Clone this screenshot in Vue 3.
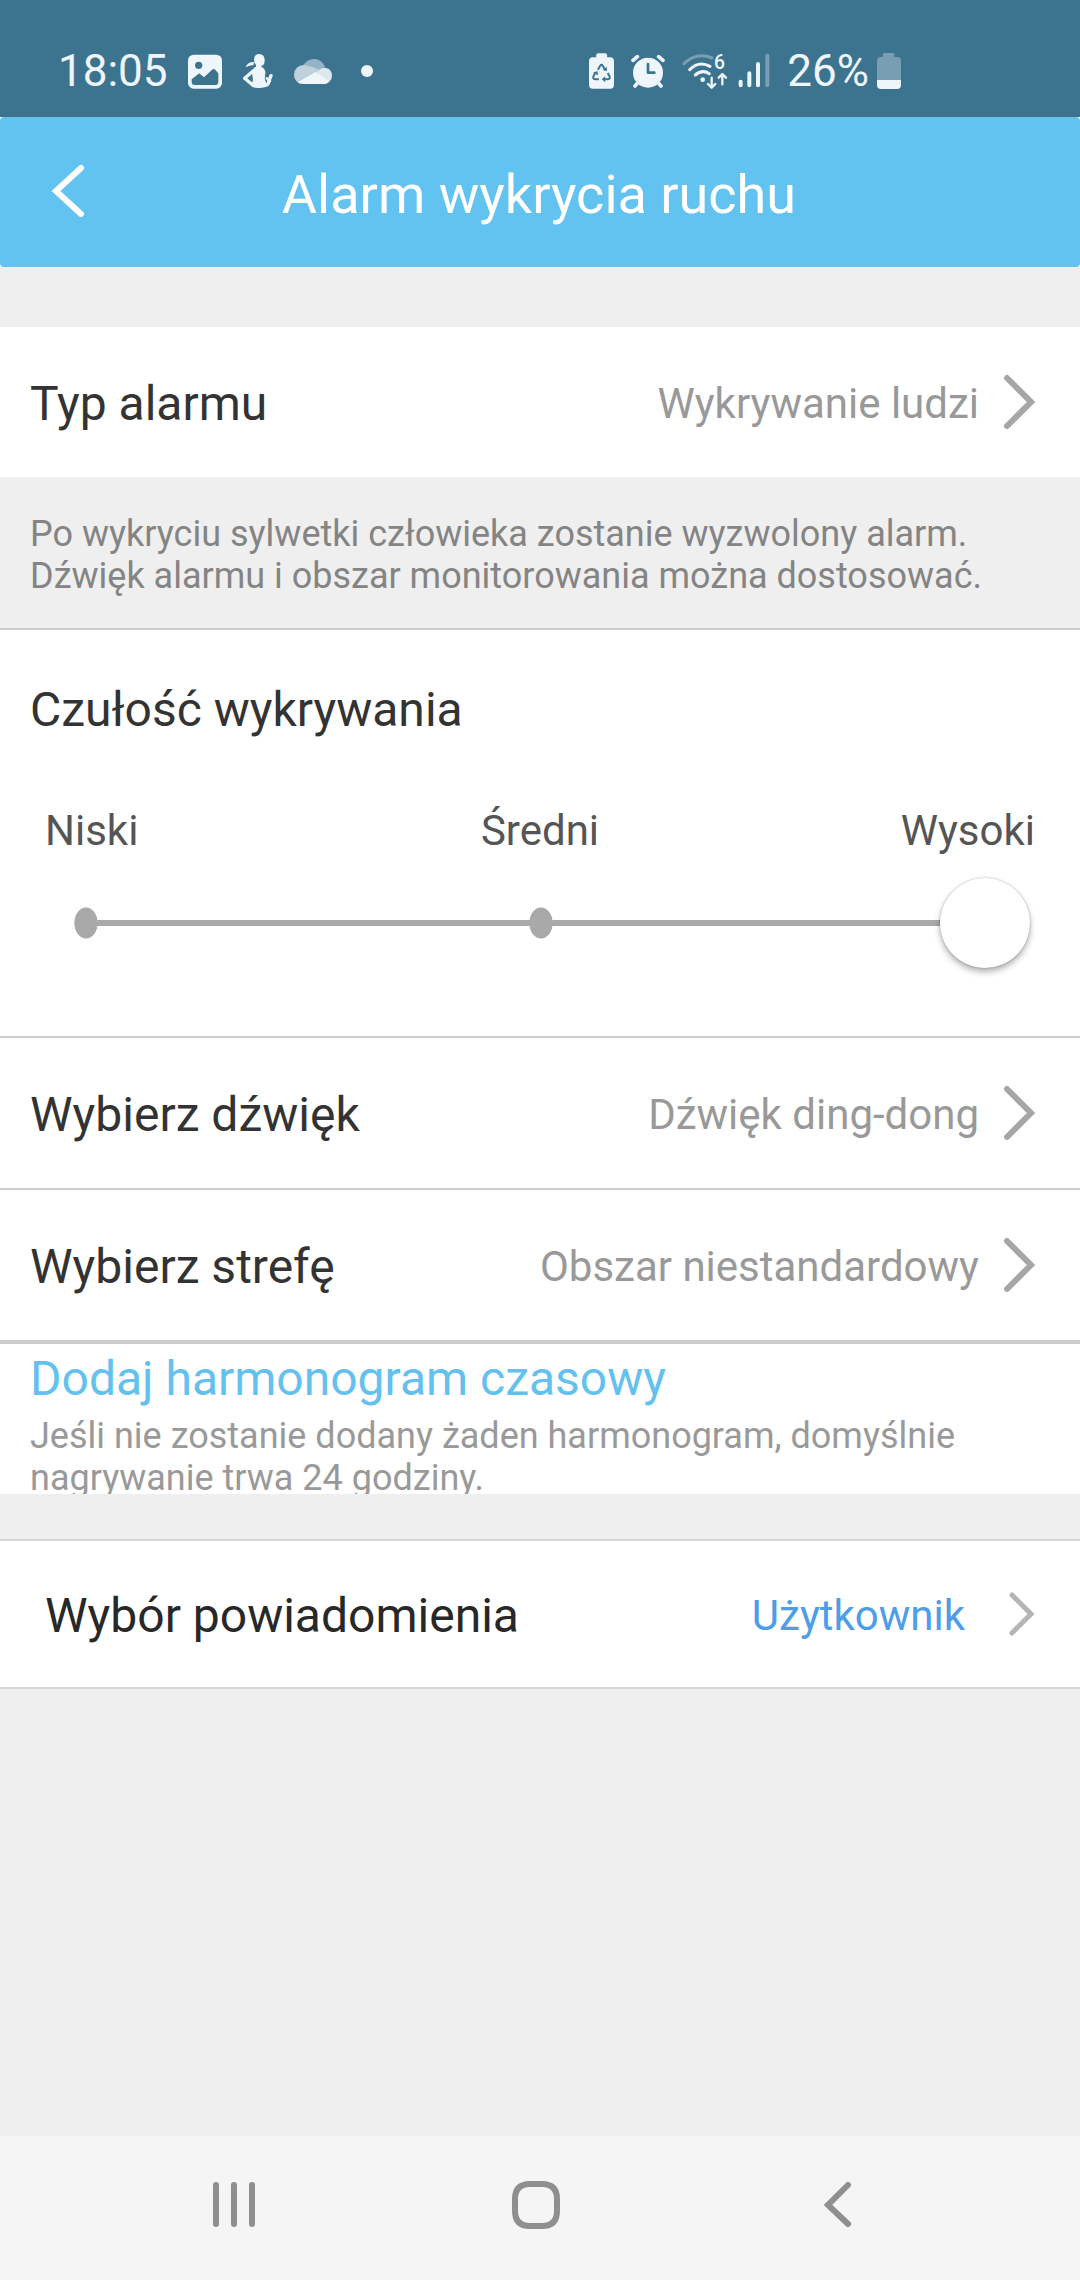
<template>
  <div class="screen">
    <div class="status-bar">
      <div class="status-left">
        <span class="status-text">18:05</span>
        <svg width="34" height="36" viewBox="0 0 102 108">
          <rect x="0" y="5" width="102" height="102" rx="17" fill="#eef6fc" />
          <circle cx="32" cy="37" r="11" fill="#3c7490" />
          <path d="M11 79 L32 62 Q34 61 36 63 L48 73 L74 49 Q77 47 80 49 L91 61 V86 Q91 96 81 96 H20 Q11 96 11 87 Z" fill="#3c7490" />
        </svg>
        <svg width="32" height="36" viewBox="0 0 96 108" fill="#eef6fc">
          <path d="M36 20 Q36 3 52 3 Q67 4 68 20 Q69 36 58 39 V46 H42 V36 Q36 30 36 20 Z" />
          <path d="M11 43 Q16 27 36 27 L34 37 Q24 36 11 43 Z" />
          <path d="M38 42 H58 Q70 46 70 60 L68 78 L74 92 Q72 105 52 105 Q34 106 28 99 L33 80 L30 60 Z" />
          <path d="M36 52 L8 76 L32 96 M66 98 Q80 96 80 86 L87 68" fill="none" stroke="#eef6fc" stroke-width="10" stroke-linecap="round" stroke-linejoin="round" />
          <path d="M74 76 L84 84" stroke="#eef6fc" stroke-width="8" stroke-linecap="round" />
        </svg>
        <svg width="38" height="36" viewBox="0 0 114 108">
          <path d="M28 36 Q40 18 60 18 Q84 19 93 42 L76 52 Z" fill="#94b3c4" />
          <path d="M28 93 Q0 90 0 65 Q2 38 30 36 Q40 36 76 50 L10 87 Z" fill="#bfd1dc" />
          <path d="M76 50 Q86 42 96 45 Q113 48 114 68 Q114 78 108 84 L58 60 Z" fill="#dce7ee" />
          <path d="M10 87 L62 58 L108 83 Q101 93 89 93 H28 Q16 93 10 87 Z" fill="#f0f6fa" />
        </svg>
        <svg width="30" height="36" viewBox="0 0 90 108">
          <circle cx="45" cy="54" r="18" fill="#eef6fc" />
        </svg>
      </div>
      <div class="status-right">
        <svg width="25" height="36" viewBox="0 0 76 108">
          <rect x="22" y="0" width="33" height="24" rx="6" fill="#eef6fc" />
          <rect x="0" y="12" width="76" height="96" rx="12" fill="#eef6fc" />
          <g fill="none" stroke="#3c7490" stroke-width="6" stroke-linejoin="round">
            <path d="M27 50 L34 38 Q38 32 42 38 L49 50" />
            <path d="M20 58 L14 69 Q10 78 19 79 H30" />
            <path d="M44 79 H57 Q66 78 62 69 L57 60" />
          </g>
          <path d="M41 50 L54 55 L55 42 Z M12 60 L25 54 L28 67 Z M49 70 V88 L39 79 Z" fill="#3c7490" />
        </svg>
        <svg width="34" height="36" viewBox="0 0 102 108" stroke-linecap="round" stroke-linejoin="round">
          <circle cx="51" cy="59" r="45" fill="#eef6fc" />
          <path d="M6 22 L19 11 M83 11 L96 22 M12 99 L22 88 M80 88 L90 99" stroke="#eef6fc" stroke-width="11" />
          <path d="M51 33 V59 H70" fill="none" stroke="#3c7490" stroke-width="8" />
        </svg>
        <div class="status-network">
          <svg class="wifi" width="46" height="36" viewBox="0 0 138 108" fill="none" stroke="#eef6fc" stroke-width="9" stroke-linecap="round" stroke-linejoin="round">
            <path d="M6 32 Q44 -4 90 15" stroke="#789eb3" />
            <path d="M23 50 Q50 22 84 40" />
            <path d="M40 66 Q61 48 82 62" />
            <circle cx="62" cy="80" r="7" fill="#eef6fc" stroke="none" />
            <path d="M89 74 V102 M78 93 L89 104 L100 93" stroke-width="7" />
            <path d="M121 94 V64 M110 74 L121 63 L132 74" stroke-width="7" />
            <text class="wifi-gen" x="96" y="49">6</text>
          </svg>
          <svg width="32" height="36" viewBox="0 0 96 108" stroke="#eef6fc" stroke-width="12" stroke-linecap="round">
            <path d="M8 86 V97 M34 61 V97 M60 33 V97" />
            <path d="M88 8 V97" stroke="#789eb3" />
          </svg>
        </div>
        <div class="status-battery">
          <span class="status-text">26%</span>
          <svg width="24" height="36" viewBox="0 0 72 108">
            <path d="M18 12 V4 Q18 0 22 0 H48 Q52 0 52 4 V12 H62 Q72 13 72 24 V81 H0 V24 Q0 13 10 12 Z" fill="#789eb3" />
            <path d="M0 81 H72 V96 Q72 108 60 108 H12 Q0 108 0 96 Z" fill="#eef6fc" />
          </svg>
        </div>
      </div>
    </div>

    <div class="header-wrap">
      <header class="header">
        <button class="back" type="button" aria-label="Wstecz">
          <svg width="34" height="54" viewBox="0 0 34 54">
            <path d="M30 4 L5 27 L30 50" fill="none" stroke="#fff" stroke-width="6" stroke-linecap="round" />
          </svg>
        </button>
        <h1>Alarm wykrycia ruchu</h1>
      </header>
    </div>

    <main class="content">
      <button class="row row-first" type="button">
        <span class="row-label">Typ alarmu</span>
        <span class="row-value">{{ alarmType }}</span>
        <svg class="chevron" width="32" height="56" viewBox="0 0 32 56">
          <path d="M4 4 L28 28 L4 52" />
        </svg>
      </button>

      <p class="hint">
        Po wykryciu sylwetki człowieka zostanie wyzwolony alarm. Dźwięk alarmu i obszar monitorowania można dostosować.
      </p>

      <section class="sensitivity">
        <label class="row-label" for="sensitivity">Czułość wykrywania</label>
        <div class="levels">
          <span v-for="level in levels" :key="level">{{ level }}</span>
        </div>
        <input id="sensitivity" v-model.number="sensitivity" class="slider" type="range" min="0" max="2" step="1" />
      </section>

      <button v-for="row in rows" :key="row.label" class="row" type="button">
        <span class="row-label">{{ row.label }}</span>
        <span class="row-value">{{ row.value }}</span>
        <svg class="chevron" width="32" height="56" viewBox="0 0 32 56">
          <path d="M4 4 L28 28 L4 52" />
        </svg>
      </button>

      <section class="schedule">
        <button class="schedule-add" type="button">Dodaj harmonogram czasowy</button>
        <p>Jeśli nie zostanie dodany żaden harmonogram, domyślnie nagrywanie trwa 24 godziny.</p>
      </section>

      <button class="row row-notify" type="button">
        <span class="row-label">Wybór powiadomienia</span>
        <span class="row-value">Użytkownik</span>
        <svg class="chevron" width="26" height="44" viewBox="0 0 26 44">
          <path d="M3 3 L22 22 L3 41" />
        </svg>
      </button>
    </main>

    <nav class="nav-bar">
      <button type="button" aria-label="Ostatnie">
        <svg width="48" height="48" viewBox="0 0 48 48">
          <path d="M6 4 V43 M24 4 V43 M42 4 V43" />
        </svg>
      </button>
      <button type="button" aria-label="Ekran główny">
        <svg width="48" height="48" viewBox="0 0 48 48">
          <path d="M18 3 H30 Q45 3 45 18 V30 Q45 45 30 45 H18 Q3 45 3 30 V18 Q3 3 18 3 Z" />
        </svg>
      </button>
      <button type="button" aria-label="Cofnij">
        <svg width="48" height="48" viewBox="0 0 48 48">
          <path d="M34 4 L14 24 L34 43" />
        </svg>
      </button>
    </nav>
  </div>
</template>

<script setup>
import { ref } from 'vue'

const alarmType = ref('Wykrywanie ludzi')
const sensitivity = ref(2)

const levels = ['Niski', 'Średni', 'Wysoki']

const rows = [
  { label: 'Wybierz dźwięk', value: 'Dźwięk ding-dong' },
  { label: 'Wybierz strefę', value: 'Obszar niestandardowy' }
]
</script>

<style>
body {
  margin: 0;
  background: #efefef;
}
</style>

<style scoped>
.screen {
  display: flex;
  flex-direction: column;
  min-height: 100vh;
  background: #efefef;
  color: #333;
  font-family: Roboto, "Noto Sans", sans-serif;
}

button {
  margin: 0;
  padding: 0;
  border: none;
  background: none;
  color: inherit;
  font: inherit;
  text-align: left;
  cursor: pointer;
}

svg {
  display: block;
  flex: none;
}

/* status bar */
.status-bar {
  display: flex;
  justify-content: space-between;
  align-items: center;
  box-sizing: border-box;
  min-height: 117px;
  padding: 25px 179px 0 58px;
  background: #3c7490;
}

.status-left {
  display: flex;
  align-items: center;
  gap: 20px;
}

.status-right {
  display: flex;
  align-items: center;
  gap: 17px;
}

.status-network {
  display: flex;
  gap: 10px;
}

.status-battery {
  display: flex;
  align-items: center;
  gap: 8px;
}

.status-text {
  color: #eef6fc;
  font-size: 44px;
  line-height: 52px;
}

.wifi {
  overflow: visible;
}

.wifi-gen {
  fill: #eef6fc;
  stroke: none;
  font-size: 58px;
  font-weight: 500;
}

/* header */
.header-wrap {
  background: #fff;
}

.header {
  display: grid;
  grid-template-columns: 119px 1fr 121px;
  align-items: center;
  min-height: 150px;
  border-radius: 4px;
  background: #62c2f0;
}

.back {
  padding: 0 0 2px 51px;
}

.header h1 {
  margin: 0;
  padding-top: 6px;
  color: #fff;
  font-size: 54px;
  font-weight: 400;
  line-height: 64px;
  text-align: center;
}

/* rows */
.content {
  display: flex;
  flex: 1;
  flex-direction: column;
  padding-top: 60px;
}

.row {
  display: flex;
  align-items: center;
  gap: 24px;
  min-height: 152px;
  padding: 0 45px 0 30px;
  border-bottom: 2px solid #ccc;
  background: #fff;
}

.row-first {
  min-height: 150px;
  border-bottom: none;
}

.row-label {
  flex: 1;
  padding-top: 4px;
  font-size: 48px;
  line-height: 56px;
}

.row-value {
  padding-top: 4px;
  color: #999;
  font-size: 42px;
  line-height: 50px;
}

.chevron path {
  fill: none;
  stroke: #a6a6a6;
  stroke-width: 6;
  stroke-linecap: round;
}

.hint {
  margin: 0;
  padding: 36px 30px 31px;
  border-bottom: 2px solid #ccc;
  color: #848484;
  font-size: 36px;
  line-height: 42px;
}

/* sensitivity */
.sensitivity {
  display: flex;
  flex-direction: column;
  padding: 52px 0 67px;
  border-bottom: 2px solid #ccc;
  background: #fff;
}

.sensitivity .row-label {
  padding: 0 30px;
}

.levels {
  display: grid;
  grid-template-columns: 1fr 1fr 1fr;
  padding: 68px 45px 0;
  color: #555;
  font-size: 42px;
  line-height: 50px;
}

.levels span:nth-child(2) {
  text-align: center;
}

.levels span:last-child {
  text-align: right;
}

.slider {
  appearance: none;
  height: 92px;
  margin: 21px 50px 0 42px;
  background:
    radial-gradient(closest-side, #a9a9a9 94%, transparent) 32px 50% / 24px 32px no-repeat,
    radial-gradient(closest-side, #a9a9a9 94%, transparent) calc(50% + 5px) 50% / 24px 32px no-repeat,
    linear-gradient(#a9a9a9, #a9a9a9) 44px 50% / calc(100% - 88px) 6px no-repeat;
  cursor: pointer;
}

.slider::-webkit-slider-thumb {
  appearance: none;
  width: 90px;
  height: 90px;
  border-radius: 50%;
  background: #fff;
  box-shadow: 0 0 2px rgba(0, 0, 0, 0.3), 0 4px 6px rgba(0, 0, 0, 0.3);
}

/* schedule */
.row:has(+ .schedule) {
  min-height: 154px;
  border-bottom-width: 4px;
}

.schedule {
  box-sizing: border-box;
  height: 150px;
  margin-bottom: 45px;
  padding: 7px 30px 0;
  overflow: hidden;
  background: #fff;
}

.schedule-add {
  display: block;
  color: #62c1ee;
  font-size: 48px;
  line-height: 56px;
}

.schedule p {
  margin: 8px 0 0;
  color: #999;
  font-size: 36px;
  line-height: 42px;
}

.row-notify {
  gap: 44px;
  min-height: 150px;
  padding-left: 45px;
  border-top: 2px solid #d6d6d6;
  border-bottom-color: #d6d6d6;
  color: #282828;
}

.row-notify .row-value {
  color: #4d9de8;
}

.row-notify .chevron path {
  stroke: #b5b5b5;
  stroke-width: 5;
}

/* navigation bar */
.nav-bar {
  display: grid;
  grid-template-columns: 1fr 1fr 1fr;
  align-items: center;
  box-sizing: border-box;
  min-height: 144px;
  padding: 0 91px 6px 83px;
  background: #f5f5f5;
}

.nav-bar button {
  display: flex;
  justify-content: center;
}

.nav-bar path {
  fill: none;
  stroke: #8f8f8f;
  stroke-width: 6;
  stroke-linecap: round;
}
</style>
